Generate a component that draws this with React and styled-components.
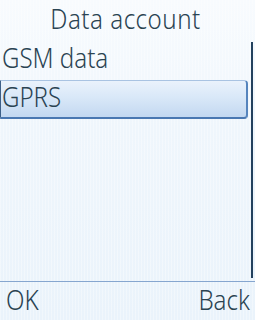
import styled, { createGlobalStyle } from "styled-components";

const GlobalStyle = createGlobalStyle`
  html, body {
    margin: 0;
    padding: 0;
    background: #f1f7fc;
  }
  body {
    font-family: "Noto Sans", "DejaVu Sans", sans-serif;
    font-weight: 300;
    color: #2a4352;
  }
`;

const items = [
  { label: "GSM data", selected: false },
  { label: "GPRS", selected: true },
];

export default function App() {
  return (
    <>
      <GlobalStyle />
      <Screen>
        <Title>
          <Label $origin="center" $spacing="0.6px">Data account</Label>
        </Title>
        <Body>
          <List>
            {items.map((item) => (
              <Item key={item.label} $selected={item.selected}>
                <Label>{item.label}</Label>
              </Item>
            ))}
          </List>
          <Scrollbar />
        </Body>
        <SoftKeys>
          <Label>OK</Label>
          <Label $origin="right">Back</Label>
        </SoftKeys>
      </Screen>
    </>
  );
}

const Screen = styled.div`
  width: 255px;
  height: 320px;
  display: flex;
  flex-direction: column;
  overflow: hidden;
  background:
    repeating-linear-gradient(90deg, rgba(255, 255, 255, 0.35) 0 1px, transparent 1px 3px),
    linear-gradient(180deg, #f8fbfe 0%, #eff6fc 40%, #eaf3fb 100%);
`;

// phone font is narrow, so squeeze the glyphs horizontally
const Label = styled.span`
  display: inline-block;
  font-size: 28px;
  line-height: 32px;
  white-space: nowrap;
  letter-spacing: ${({ $spacing }) => $spacing || "0"};
  transform: scaleX(0.86);
  transform-origin: ${({ $origin }) => $origin || "left"} center;
`;

const Title = styled.div`
  height: 41px;
  box-sizing: border-box;
  padding: 2px 4px 0 0;
  text-align: center;
`;

const Body = styled.div`
  height: 241px;
  box-sizing: border-box;
  display: flex;
  border-bottom: 1px solid #86a6cf;
`;

const List = styled.div`
  flex: 1;
  display: flex;
  flex-direction: column;
`;

const Item = styled.div`
  height: 39px;
  box-sizing: border-box;
  margin-right: 3px;
  padding-left: 2px;
  border-radius: 0 4px 4px 0;
  ${({ $selected }) =>
    $selected &&
    `
    padding-left: 1px;
    background: linear-gradient(180deg, #eaf2fc 0%, #d9e8f8 45%, #c3d8f1 100%);
    border-left: 1px solid #3c5f88;
    border-top: 1px solid #a9c3e2;
    border-right: 2px solid #5584bd;
    border-bottom: 2px solid #4a78b2;
    > span { margin-top: -1px; }
  `}
`;

const Scrollbar = styled.div`
  width: 2px;
  margin: 1px 2px 3px 0;
  background: #23415e;
`;

const SoftKeys = styled.div`
  height: 38px;
  box-sizing: border-box;
  display: flex;
  justify-content: space-between;
  padding: 1px 5px 0 6px;
`;
